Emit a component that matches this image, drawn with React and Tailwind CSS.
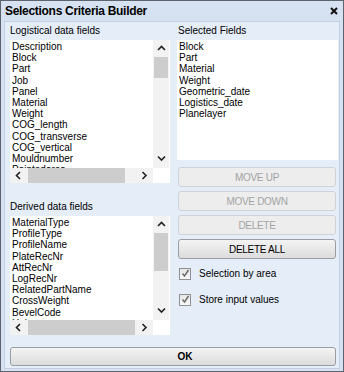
import React from "react";

const F = { fontFamily: '"Liberation Sans", Arial, sans-serif' };

function Chevron({ dir }) {
  const pts = {
    up: "1,5 4.5,1.5 8,5",
    down: "1,1.5 4.5,5 8,1.5",
    left: "5,1 1.5,4.5 5,8",
    right: "1.5,1 5,4.5 1.5,8",
  }[dir];
  const vert = dir === "up" || dir === "down";
  return (
    <svg width={vert ? 9 : 7} height={vert ? 7 : 9} viewBox={vert ? "0 0 9 7" : "0 0 7 9"}>
      <polyline points={pts} fill="none" stroke="#222" strokeWidth="1.6" />
    </svg>
  );
}

function ListBox({ items, height, vThumbTop, vThumbH, hThumbW }) {
  return (
    <div className="relative bg-white overflow-hidden" style={{ height }}>
      <div className="pl-[2px] pt-[1px] text-[10px] leading-[11.2px] text-black whitespace-nowrap">
        {items.map((t) => (
          <div key={t}>{t}</div>
        ))}
      </div>
      {/* vertical scrollbar */}
      <div className="absolute right-[1px] top-0 w-[16px] bottom-[15px] bg-[#f2f2f2] flex flex-col">
        <div className="h-[17px] flex items-center justify-center shrink-0">
          <Chevron dir="up" />
        </div>
        <div className="relative flex-1">
          <div className="absolute left-[1px] right-[1px] bg-[#cdcdcd]" style={{ top: vThumbTop, height: vThumbH }} />
        </div>
        <div className="h-[17px] flex items-center justify-center shrink-0 pb-[2px]">
          <Chevron dir="down" />
        </div>
      </div>
      {/* horizontal scrollbar */}
      <div className="absolute left-0 bottom-0 h-[15px] w-[143px] bg-[#f2f2f2] flex">
        <div className="w-[16px] flex items-center justify-center shrink-0">
          <Chevron dir="left" />
        </div>
        <div className="relative flex-1">
          <div className="absolute top-0 bottom-0 left-[2px] bg-[#cdcdcd]" style={{ width: hThumbW }} />
        </div>
        <div className="w-[17px] flex items-center justify-center shrink-0">
          <Chevron dir="right" />
        </div>
      </div>
      <div className="absolute right-0 bottom-0 h-[15px] w-[17px] bg-white" />
    </div>
  );
}

function Btn({ children, disabled }) {
  return (
    <div
      className={
        "h-[20px] rounded-[3px] border flex items-center justify-center text-[10px] tracking-[-0.3px] " +
        (disabled
          ? "border-[#cfd2d6] bg-[#ededed] text-[#a3a3a3]"
          : "border-[#9a9da2] bg-gradient-to-b from-[#f4f4f4] to-[#dcdcdc] text-black")
      }
    >
      {children}
    </div>
  );
}

function Check({ label }) {
  return (
    <div className="flex items-center h-[13px] pl-[2px]">
      <div className="w-[12px] h-[12px] border border-[#8e9297] bg-gradient-to-b from-[#e6e6e6] to-[#f8f8f8] flex items-center justify-center">
        <svg width="9" height="9" viewBox="0 0 9 9">
          <polyline points="1.5,4.5 3.5,7 7.5,1" fill="none" stroke="#6a6a6a" strokeWidth="1.4" />
        </svg>
      </div>
      <span className="ml-[8px] text-[10px] text-black">{label}</span>
    </div>
  );
}

export default function App() {
  const logistical = [
    "Description",
    "Block",
    "Part",
    "Job",
    "Panel",
    "Material",
    "Weight",
    "COG_length",
    "COG_transverse",
    "COG_vertical",
    "Mouldnumber",
    "Paintedarea",
    "Plane",
  ];
  const derived = [
    "MaterialType",
    "ProfileType",
    "ProfileName",
    "PlateRecNr",
    "AttRecNr",
    "LogRecNr",
    "RelatedPartName",
    "CrossWeight",
    "BevelCode",
    "Holes",
    "Notches",
  ];
  const selected = ["Block", "Part", "Material", "Weight", "Geometric_date", "Logistics_date", "Planelayer"];

  return (
    <div style={F} className="w-[344px] h-[372px] border border-[#5d646e] bg-[#d6e2f1] flex flex-col">
      <div className="h-[20px] shrink-0 flex items-center justify-between pl-[4px] pr-[5px]">
        <span className="text-[12px] font-bold tracking-[-0.3px] text-black">Selections Criteria Builder</span>
        <svg width="8" height="8" viewBox="0 0 8 8">
          <path d="M1 1 L7 7 M7 1 L1 7" stroke="#111" strokeWidth="2" />
        </svg>
      </div>
      <div className="flex-1 mx-[3px] mb-[2px] border border-[#c2cfe1] bg-[#e5edf8] flex flex-col pl-[5px] pt-[3px]">
        <div className="flex gap-[7px]">
          <div className="w-[160px] flex flex-col">
            <div className="h-[12px] leading-[12px] text-[10px] text-black">Logistical data fields</div>
            <div className="mt-[3px]">
              <ListBox items={logistical} height={143} vThumbTop={0} vThumbH={21} hThumbW={97} />
            </div>
            <div className="mt-[18px] h-[12px] leading-[12px] text-[10px] text-black">Derived data fields</div>
            <div className="mt-[3px]">
              <ListBox items={derived} height={119} vThumbTop={0} vThumbH={38} hThumbW={107} />
            </div>
          </div>
          <div className="w-[161px] flex flex-col">
            <div className="h-[12px] leading-[12px] text-[10px] text-black pl-[1px]">Selected Fields</div>
            <div className="mt-[3px] h-[120px] bg-white pl-[2px] pt-[1px] text-[10px] leading-[11.2px] text-black">
              {selected.map((t) => (
                <div key={t}>{t}</div>
              ))}
            </div>
            <div className="mt-[7px] ml-[1px] w-[158px] flex flex-col gap-[4px]">
              <Btn disabled>MOVE UP</Btn>
              <Btn disabled>MOVE DOWN</Btn>
              <Btn disabled>DELETE</Btn>
              <Btn>DELETE ALL</Btn>
            </div>
            <div className="mt-[8px] flex flex-col gap-[13px]">
              <Check label="Selection by area" />
              <Check label="Store input values" />
            </div>
          </div>
        </div>
        <div className="mt-[12px] w-[326px] h-[19px] rounded-[3px] border border-[#9a9da2] bg-gradient-to-b from-[#f4f4f4] to-[#dcdcdc] flex items-center justify-center pl-[24px] text-[10px] font-bold text-black">
          OK
        </div>
      </div>
    </div>
  );
}
